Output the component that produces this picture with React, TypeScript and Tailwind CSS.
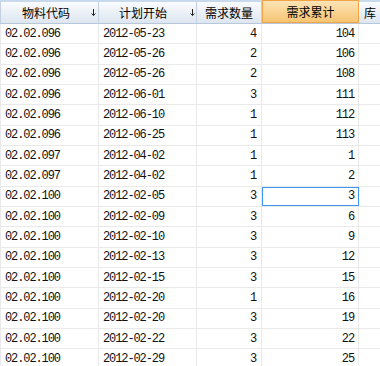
const ROWS: [string, string, number, number][] = [
  ["02.02.096", "2012-05-23", 4, 104],
  ["02.02.096", "2012-05-26", 2, 106],
  ["02.02.096", "2012-05-26", 2, 108],
  ["02.02.096", "2012-06-01", 3, 111],
  ["02.02.096", "2012-06-10", 1, 112],
  ["02.02.096", "2012-06-25", 1, 113],
  ["02.02.097", "2012-04-02", 1, 1],
  ["02.02.097", "2012-04-02", 1, 2],
  ["02.02.100", "2012-02-05", 3, 3],
  ["02.02.100", "2012-02-09", 3, 6],
  ["02.02.100", "2012-02-10", 3, 9],
  ["02.02.100", "2012-02-13", 3, 12],
  ["02.02.100", "2012-02-15", 3, 15],
  ["02.02.100", "2012-02-20", 1, 16],
  ["02.02.100", "2012-02-20", 3, 19],
  ["02.02.100", "2012-02-22", 3, 22],
  ["02.02.100", "2012-02-29", 3, 25],
];

const COLS = "grid grid-cols-[99px_98px_65px_97px_1fr]";
const MONO = "font-['Liberation_Mono','DejaVu_Sans_Mono',monospace] text-[12px] tracking-[-1.1px] text-[#111]";
const CJK = "font-['Noto_Sans_CJK_SC','Noto_Sans',sans-serif] text-[12px]";

function SortArrow() {
  return (
    <svg width="5" height="7" viewBox="0 0 5 7" className="shrink-0">
      <path d="M2.5 0V6.5" stroke="#222" strokeWidth="1" />
      <path d="M0.5 4.5L2.5 6.5L4.5 4.5" stroke="#222" strokeWidth="1" fill="none" />
    </svg>
  );
}

export default function App() {
  return (
    <div className="w-[380px] h-[366px] overflow-hidden bg-white">
      <div className={`${COLS} h-[24px] border-t-2 border-[#c9d9ec] border-b border-b-[#b8c8dc] bg-gradient-to-b from-[#fafcfe] to-[#dde5ef] ${CJK} text-black`}>
        <div className="flex items-center border-l border-r border-[#c3d0df]">
          <span className="w-[90px] text-center">物料代码</span>
          <SortArrow />
        </div>
        <div className="flex items-center border-r border-[#c3d0df]">
          <span className="w-[88px] text-center">计划开始</span>
          <span className="ml-[3px]">
            <SortArrow />
          </span>
        </div>
        <div className="flex items-center justify-center border-r border-[#c3d0df]">需求数量</div>
        <div className="flex items-center justify-center border border-[#f0a445] -mt-[2px] bg-gradient-to-b from-[#fce3b6] to-[#f6c571]">
          需求累计
        </div>
        <div className="flex items-center pl-[5px]">库</div>
      </div>
      {ROWS.map((r, i) => (
        <div key={i} className={`${COLS} h-[20.33px] border-b border-[#e9e9e9]`}>
          <div className={`flex items-center border-l border-r border-[#e9e9e9] pl-[4px] ${MONO}`}>{r[0]}</div>
          <div className={`flex items-center border-r border-[#e9e9e9] pl-[4px] ${MONO}`}>{r[1]}</div>
          <div className={`flex items-center justify-end border-r border-[#e9e9e9] pr-[5px] ${MONO}`}>{r[2]}</div>
          <div
            className={`flex items-center justify-end border-r border-[#e9e9e9] pr-[4px] ${MONO} ${
              i === 8 ? "outline outline-1 -outline-offset-1 outline-[#3d97f2]" : ""
            }`}
          >
            {r[3]}
          </div>
          <div />
        </div>
      ))}
    </div>
  );
}
